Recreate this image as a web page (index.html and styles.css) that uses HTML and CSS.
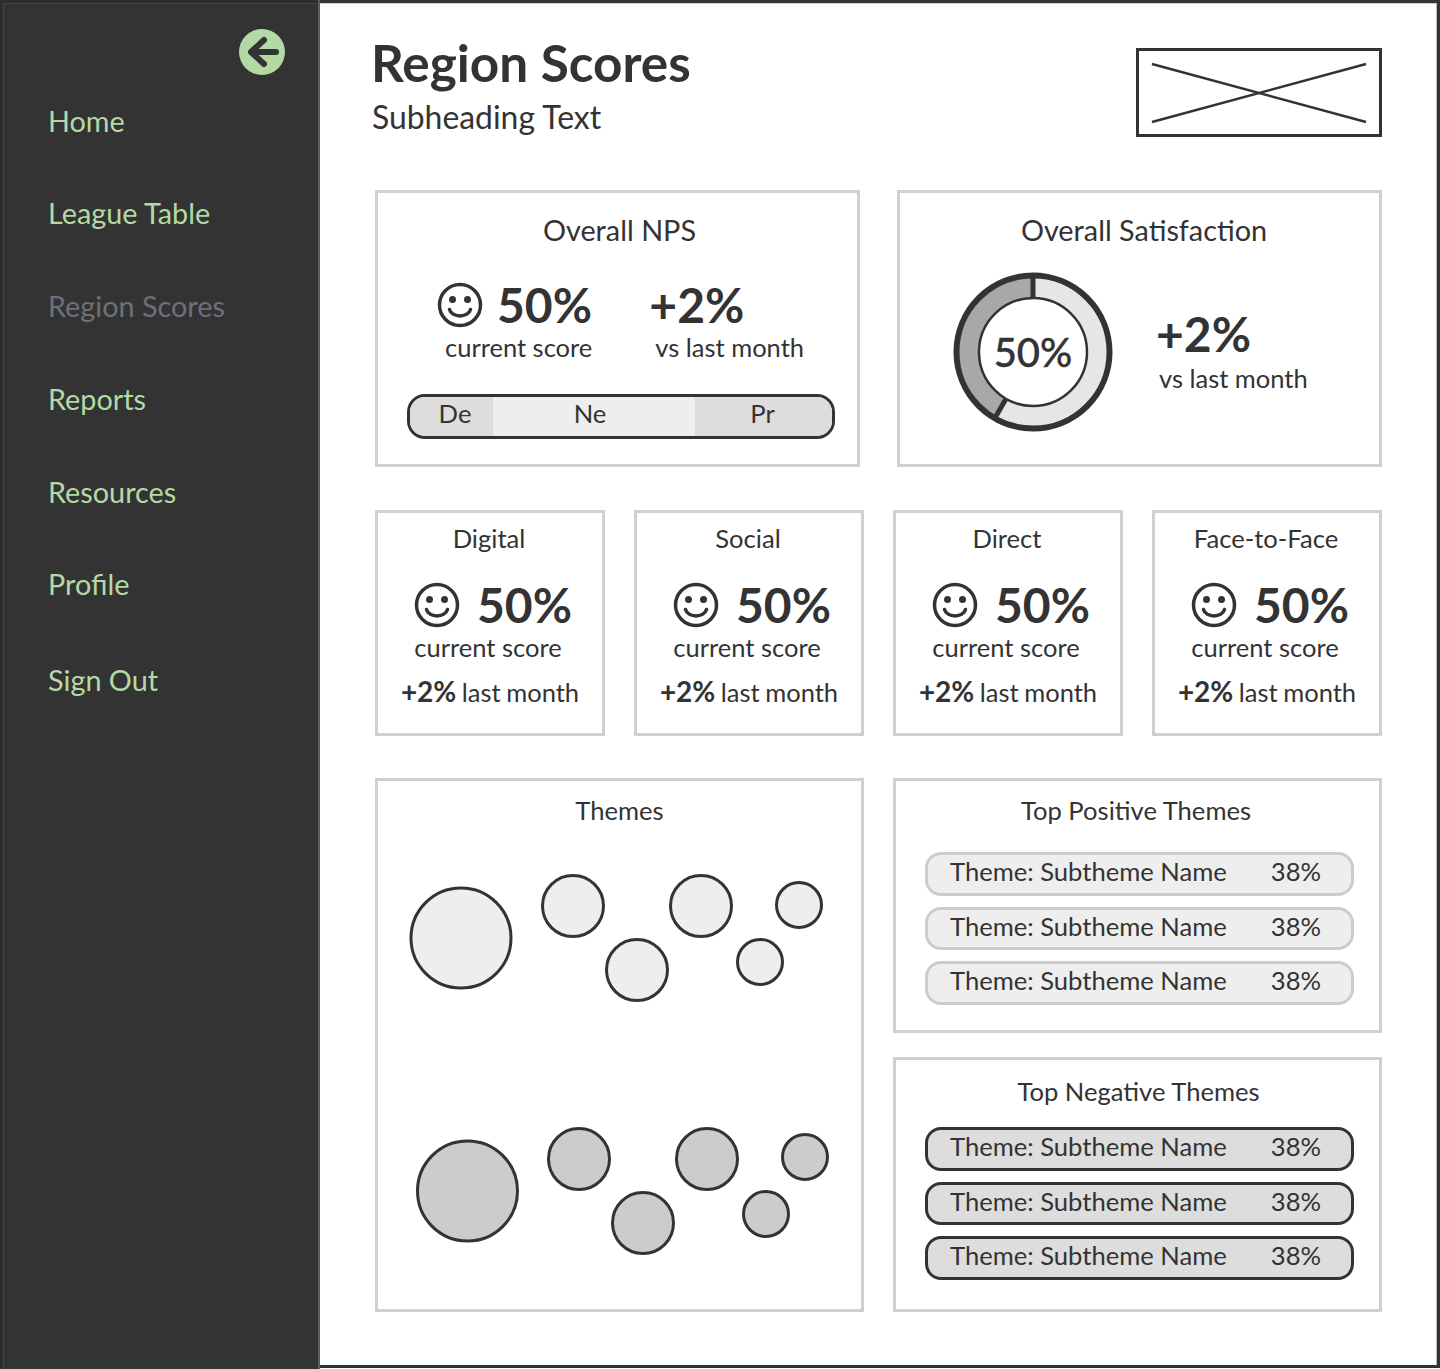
FILE: index.html
```html
<!DOCTYPE html>
<html lang="en">
<head>
  <meta charset="UTF-8">
  <meta name="viewport" content="width=device-width, initial-scale=1.0">
  <title>Region Scores</title>
  <link rel="stylesheet" href="styles.css">
</head>
<body>
  <div class="app">
    <aside class="sidebar">
      <div class="back-row">
        <svg class="back-icon" viewBox="0 0 46 46">
          <circle cx="23" cy="23" r="23" fill="#b3d9a5"/>
          <path d="M25 11 L12 23 L25 35 M13 23 H37" fill="none" stroke="#333" stroke-width="6" stroke-linecap="round" stroke-linejoin="round"/>
        </svg>
      </div>
      <nav class="nav">
        <a class="nav-item">Home</a>
        <a class="nav-item">League Table</a>
        <a class="nav-item nav-item-active">Region Scores</a>
        <a class="nav-item">Reports</a>
        <a class="nav-item">Resources</a>
        <a class="nav-item">Profile</a>
        <a class="nav-item nav-item-last">Sign Out</a>
      </nav>
    </aside>

    <main class="main">
      <div class="header">
        <div class="title-block">
          <h1>Region Scores</h1>
          <p class="subtitle">Subheading Text</p>
        </div>
        <div class="logo">
          <svg viewBox="0 0 240 83">
            <path d="M13 13 L227 71 M13 71 L227 13" stroke="#333" stroke-width="2.5" fill="none"/>
          </svg>
        </div>
      </div>

      <div class="row-overall">
        <section class="card">
          <div class="card-title title-overall title-nps">Overall NPS</div>
          <div class="nps-stats">
            <div class="stat">
              <div class="big-row">
                <svg class="smile" viewBox="0 0 46 46"><use href="#smile"/></svg>
                <span class="big">50%</span>
              </div>
              <div class="label label-score">current score</div>
            </div>
            <div class="stat">
              <div class="big-row"><span class="big">+2%</span></div>
              <div class="label label-month">vs last month</div>
            </div>
          </div>
          <div class="nps-bar">
            <div class="nps-seg seg-de">De</div>
            <div class="nps-seg seg-ne">Ne</div>
            <div class="nps-seg seg-pr">Pr</div>
          </div>
        </section>

        <section class="card">
          <div class="card-title title-overall title-sat">Overall Satisfaction</div>
          <div class="satisfaction">
            <div class="donut">
              <svg viewBox="0 0 160 160">
                <circle cx="80" cy="80" r="77" fill="#e6e6e6"/>
                <path d="M47 137.16 A66 66 0 0 1 80 14" fill="none" stroke="#a8a8a8" stroke-width="24"/>
                <circle cx="80" cy="80" r="76.5" fill="none" stroke="#333" stroke-width="6"/>
                <circle cx="80" cy="80" r="54" fill="#fff" stroke="#333" stroke-width="2.5"/>
                <path d="M80 3 V26 M53 126.8 L41.5 146.7" stroke="#333" stroke-width="5"/>
              </svg>
              <span class="donut-value">50%</span>
            </div>
            <div class="stat">
              <div class="big">+2%</div>
              <div class="label">vs last month</div>
            </div>
          </div>
        </section>
      </div>

      <div class="row-channels">
        <section class="card channel">
          <div class="card-title">Digital</div>
          <div class="big-row channel-row">
            <svg class="smile" viewBox="0 0 46 46"><use href="#smile"/></svg>
            <span class="big">50%</span>
          </div>
          <div class="label channel-label">current score</div>
          <div class="channel-change"><b>+2%</b> last month</div>
        </section>
        <section class="card channel">
          <div class="card-title">Social</div>
          <div class="big-row channel-row">
            <svg class="smile" viewBox="0 0 46 46"><use href="#smile"/></svg>
            <span class="big">50%</span>
          </div>
          <div class="label channel-label">current score</div>
          <div class="channel-change"><b>+2%</b> last month</div>
        </section>
        <section class="card channel">
          <div class="card-title">Direct</div>
          <div class="big-row channel-row">
            <svg class="smile" viewBox="0 0 46 46"><use href="#smile"/></svg>
            <span class="big">50%</span>
          </div>
          <div class="label channel-label">current score</div>
          <div class="channel-change"><b>+2%</b> last month</div>
        </section>
        <section class="card channel">
          <div class="card-title">Face-to-Face</div>
          <div class="big-row channel-row">
            <svg class="smile" viewBox="0 0 46 46"><use href="#smile"/></svg>
            <span class="big">50%</span>
          </div>
          <div class="label channel-label">current score</div>
          <div class="channel-change"><b>+2%</b> last month</div>
        </section>
      </div>

      <div class="row-themes">
        <section class="card themes">
          <div class="card-title">Themes</div>
          <svg class="bubbles" viewBox="0 0 483 440">
            <g fill="#eee" stroke="#333" stroke-width="3">
              <circle cx="83" cy="98" r="50"/>
              <circle cx="195" cy="66" r="30.5"/>
              <circle cx="323" cy="66" r="30.5"/>
              <circle cx="421" cy="65" r="22.5"/>
              <circle cx="259" cy="130" r="30.5"/>
              <circle cx="382" cy="122" r="22.5"/>
            </g>
            <g fill="#ccc" stroke="#333" stroke-width="3">
              <circle cx="89.5" cy="351" r="50"/>
              <circle cx="201" cy="319" r="30.5"/>
              <circle cx="329" cy="319" r="30.5"/>
              <circle cx="427" cy="317" r="22.5"/>
              <circle cx="265" cy="383" r="30.5"/>
              <circle cx="388" cy="374" r="22.5"/>
            </g>
          </svg>
        </section>

        <div class="top-lists">
          <section class="card top-card top-positive">
            <div class="card-title">Top Positive Themes</div>
            <div class="pill-list">
              <div class="pill"><span>Theme: Subtheme Name</span><span>38%</span></div>
              <div class="pill"><span>Theme: Subtheme Name</span><span>38%</span></div>
              <div class="pill"><span>Theme: Subtheme Name</span><span>38%</span></div>
            </div>
          </section>
          <section class="card top-card top-negative">
            <div class="card-title">Top Negative Themes</div>
            <div class="pill-list">
              <div class="pill"><span>Theme: Subtheme Name</span><span>38%</span></div>
              <div class="pill"><span>Theme: Subtheme Name</span><span>38%</span></div>
              <div class="pill"><span>Theme: Subtheme Name</span><span>38%</span></div>
            </div>
          </section>
        </div>
      </div>
    </main>
  </div>

  <svg class="defs" width="0" height="0">
    <defs>
      <g id="smile">
        <circle cx="23" cy="23" r="20.5" fill="none" stroke="#333" stroke-width="3.5"/>
        <circle cx="15.5" cy="17.5" r="3.5" fill="#333"/>
        <circle cx="30.5" cy="17.5" r="3.5" fill="#333"/>
        <path d="M12.5 27.5 C15 36 31 36 33.5 27.5" fill="none" stroke="#333" stroke-width="3.5" stroke-linecap="round"/>
      </g>
    </defs>
  </svg>
</body>
</html>
```

FILE: styles.css
```css
* {
  box-sizing: border-box;
}

body {
  margin: 0;
  font-family: Lato, "Liberation Sans", sans-serif;
  color: #333;
  background: #fff;
}

.defs {
  display: block;
  height: 0;
}

.app {
  display: flex;
  width: 1440px;
  height: 1369px;
  overflow: hidden;
}

.sidebar {
  width: 320px;
  height: 1369px;
  flex-shrink: 0;
  padding: 29px 0 0 48px;
  background: #333;
  border-right: 2px solid #5c5c5c;
  box-shadow: inset 3px 3px 0 #2d2d2d, inset 4px 4px 0 #444;
}

.back-row {
  display: flex;
  justify-content: flex-end;
  padding-right: 33px;
}

.back-icon {
  width: 46px;
  height: 46px;
}

.nav {
  display: flex;
  flex-direction: column;
  margin-top: -0.5px;
}

.nav-item {
  height: 92.75px;
  line-height: 92px;
  font-size: 28.8px;
  color: #b3d9a5;
}

.nav-item-active {
  color: #6f6f78;
}

.nav-item-last {
  margin-top: 3px;
}

.main {
  flex: 1;
  height: 1368px;
  padding: 31px 55px 0 52px;
  border-top: 3px solid #333;
  border-right: 3px solid #333;
  border-bottom: 3px solid #333;
  box-shadow: inset -1px 0 0 #bbb, inset 0 1px 0 #ccc;
}

.header {
  display: flex;
  justify-content: space-between;
  align-items: flex-start;
  margin-bottom: 53px;
}

h1 {
  margin: -1px 0 0 -1px;
  font-size: 51.3px;
  line-height: 58px;
  font-weight: 700;
}

.subtitle {
  margin: 6px 0 0;
  font-size: 31.9px;
  line-height: 40px;
}

.logo {
  width: 246px;
  height: 89px;
  margin-top: 14px;
  border: 3px solid #333;
}

.logo svg {
  display: block;
  width: 240px;
  height: 83px;
}

.card {
  border: 3px solid #d0d0d0;
  background: #fff;
}

.card-title {
  font-size: 25.6px;
  line-height: 30px;
  text-align: center;
}

.row-overall {
  display: grid;
  grid-template-columns: 485px 485px;
  gap: 37px;
  height: 277px;
  margin: 0 0 43px 3px;
}

.title-overall {
  padding-top: 22px;
  font-size: 28.8px;
}

.title-nps {
  padding-left: 4px;
}

.title-sat {
  padding-left: 9px;
}

.nps-stats {
  display: flex;
  gap: 57px;
  padding-left: 59px;
  margin-top: 35px;
}

.stat {
  display: flex;
  flex-direction: column;
  align-items: flex-start;
}

.big-row {
  display: flex;
  align-items: center;
  gap: 14px;
  height: 50px;
}

.big {
  font-size: 48px;
  line-height: 50px;
  font-weight: 700;
}

.smile {
  width: 46px;
  height: 46px;
}

.label {
  font-size: 25.5px;
  line-height: 34px;
  margin-top: 1px;
}

.label-score {
  margin: 0 0 0 8px;
}

.label-month {
  margin: 0 0 0 6px;
}

.nps-bar {
  display: flex;
  height: 45px;
  margin: 30px 22px 0 29px;
  border: 3px solid #333;
  border-radius: 18px;
  overflow: hidden;
}

.nps-seg {
  font-size: 25.6px;
  line-height: 32px;
  text-align: center;
}

.seg-de {
  width: 83px;
  background: #ddd;
  padding-left: 7px;
}

.seg-ne {
  width: 202px;
  background: #eee;
  padding-right: 8px;
}

.seg-pr {
  flex: 1;
  background: #ddd;
  padding-right: 2px;
}

.satisfaction {
  display: flex;
  align-items: center;
  gap: 43px;
  margin-top: 27px;
  padding-left: 53px;
}

.donut {
  position: relative;
  width: 160px;
  height: 160px;
}

.donut svg {
  display: block;
  width: 160px;
  height: 160px;
}

.donut-value {
  position: absolute;
  top: 0;
  left: 0;
  right: 0;
  bottom: 0;
  display: flex;
  align-items: center;
  justify-content: center;
  font-size: 40px;
  font-weight: 500;
  -webkit-text-stroke: 0.4px #333;
}

.satisfaction .stat {
  margin-bottom: 1px;
}

.satisfaction .label {
  margin: 2px 0 0 3px;
}

.row-channels {
  display: grid;
  grid-template-columns: repeat(4, 230px);
  gap: 29px;
  height: 226px;
  margin: 0 0 42px 3px;
}

.channel {
  padding-top: 10px;
}

.channel .card-title {
  padding-right: 2px;
}

.channel-row {
  justify-content: center;
  gap: 17px;
  margin-top: 27px;
  padding-left: 6px;
}

.channel-label {
  text-align: center;
  margin-top: 0;
  padding-right: 4px;
}

.channel-change {
  margin-top: 11px;
  font-size: 25.5px;
  line-height: 33px;
  text-align: center;
  white-space: nowrap;
  word-spacing: -1px;
}

.channel-change b {
  font-size: 28px;
  font-weight: 700;
}

.row-themes {
  display: grid;
  grid-template-columns: 489px 489px;
  gap: 29px;
  height: 534px;
  margin-left: 3px;
}

.themes {
  padding-top: 14px;
}

.bubbles {
  display: block;
  width: 483px;
  height: 440px;
  margin-top: 15px;
}

.top-lists {
  display: flex;
  flex-direction: column;
  gap: 24px;
}

.top-card {
  height: 255px;
}

.top-positive {
  padding-top: 14px;
}

.top-positive .card-title {
  padding-right: 3px;
}

.top-negative {
  padding-top: 16px;
}

.top-negative .card-title {
  padding-left: 2px;
}

.pill-list {
  display: flex;
  flex-direction: column;
  gap: 11px;
  margin: 27px 25px 0 29px;
}

.top-negative .pill-list {
  margin-top: 21px;
}

.pill {
  display: flex;
  justify-content: space-between;
  height: 43.5px;
  padding: 0 30px 0 22px;
  font-size: 25.6px;
  line-height: 32px;
  border: 3px solid #ccc;
  border-radius: 16px;
  background: #eee;
}

.top-negative .pill {
  border-color: #333;
  background: #ddd;
}
```
